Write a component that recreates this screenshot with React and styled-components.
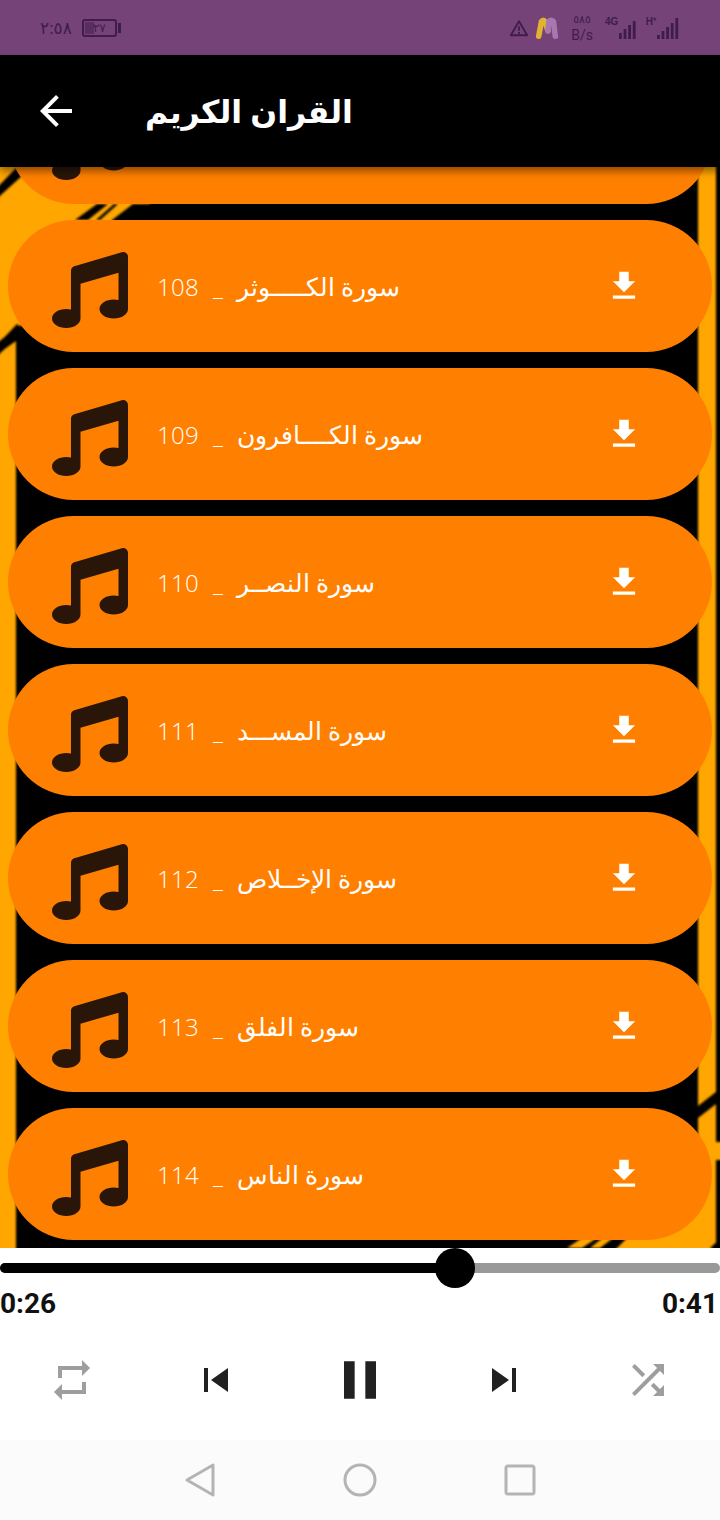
import React from 'react';
import styled, { createGlobalStyle } from 'styled-components';
import { FaMusic } from 'react-icons/fa';

const tracks = [
  { id: 108, name: 'سورة الكـــــوثر' },
  { id: 109, name: 'سورة الكــــافرون' },
  { id: 110, name: 'سورة النصــر' },
  { id: 111, name: 'سورة المســـد' },
  { id: 112, name: 'سورة الإخــلاص' },
  { id: 113, name: 'سورة الفلق' },
  { id: 114, name: 'سورة الناس' },
];

const MaterialIcon = ({ d, size, color }) => (
  <svg width={ size } height={ size } viewBox="0 0 24 24" fill={ color }>
    <path d={ d } />
  </svg>
);

const icons = {
  back: 'M20 11H7.83l5.59-5.59L12 4l-8 8 8 8 1.41-1.41L7.83 13H20v-2z',
  download: 'M19 9h-4V3H9v6H5l7 7 7-7zM5 18v2h14v-2H5z',
  repeat: 'M7 7h10v3l4-4-4-4v3H5v6h2V7zm10 10H7v-3l-4 4 4 4v-3h12v-6h-2v4z',
  previous: 'M6 6h2v12H6zm3.5 6l8.5 6V6z',
  pause: 'M6 19h4V5H6v14zm8-14v14h4V5h-4z',
  next: 'M6 18l8.5-6L6 6v12zM16 6v12h2V6h-2z',
  shuffle: 'M10.59 9.17L5.41 4 4 5.41l5.17 5.17 1.42-1.41zM14.5 4l2.04 2.04L4 18.59 5.41 20 17.96 7.46 20 9.5V4h-5.5zm.33 9.41l-1.41 1.41 3.13 3.13L14.5 20H20v-5.5l-2.04 2.04-3.13-3.13z',
};

const Signal = ({ bars }) => (
  <svg width={ bars.length * 4.6 } height="22" viewBox={ `0 0 ${ bars.length * 4.6 } 22` } fill={ statusInk }>
    { bars.map((h, i) => <rect key={ i } x={ i * 4.6 + 1 } y={ 22 - h } width="2.8" height={ h } />) }
  </svg>
);

const Backdrop = () => (
  <BackdropArt viewBox="0 167 720 1081" preserveAspectRatio="none">
    <BackdropLayer>
      <rect x="-10" y="157" width="740" height="1101" fill="#000" />
      <g fill="#ffa600">
        <polygon points="-10,157 150,157 150,204 133,204 112,220 90,300 17,327 -10,349" />
        <polygon points="-10,359 16,341 16,1258 -10,1258" />
        <polygon points="698,157 716,157 716,1092 698,1106" />
        <polygon points="698,1118 716,1104 716,1142 730,1142 730,1160 716,1160 716,1258 607,1258 640,1225 698,1200" />
        <polygon points="567,1248 585,1236 600,1236 582,1248" />
        <polygon points="590,1248 605,1236 616,1236 600,1248" />
      </g>
      <g fill="#000">
        <polygon points="-10,195 17,167 24,174 -10,205" />
        <polygon points="-10,353 17,324 24,330 -10,363" />
        <polygon points="97,204 108,204 88,220 75,220" />
        <polygon points="114,204 118,204 100,220 96,220" />
        <polygon points="710,1248 730,1230 730,1258" />
      </g>
    </BackdropLayer>
  </BackdropArt>
);

const App = () => (
  <Screen>
    <GlobalStyle />
    <StatusBar>
      <StatusGroup>
        <Clock>٢:٥٨</Clock>
        <Battery><BatteryLevel>٢٧</BatteryLevel></Battery>
      </StatusGroup>
      <StatusGroup>
        <svg width="20" height="20" viewBox="0 0 22 20" fill="none" stroke={ statusInk } strokeWidth="2">
          <path d="M11 2.5 20 18H2z" strokeLinejoin="round" />
          <path d="M11 8v5M11 14.5v2" />
        </svg>
        <BrandMark width="24" height="24" viewBox="0 0 26 24" fill="none" strokeWidth="6" strokeLinecap="round">
          <path d="M4 21 7 5q2-3 4 0l3 10" stroke="#e3b32f" />
          <path d="M14 15l1-10q3-3 5 0l2 16" stroke="#a777b0" />
        </BrandMark>
        <NetSpeed>
          <SpeedValue>٥٨٥</SpeedValue>
          <SpeedUnit>B/s</SpeedUnit>
        </NetSpeed>
        <Network>
          <NetworkLabel>4G</NetworkLabel>
          <Signal bars={ [6, 10, 14, 18] } />
        </Network>
        <Network>
          <NetworkLabel>H⁺</NetworkLabel>
          <Signal bars={ [4, 8, 12, 16, 21] } />
        </Network>
      </StatusGroup>
    </StatusBar>

    <AppBar>
      <BackButton><MaterialIcon d={ icons.back } size={ 48 } color="#fff" /></BackButton>
      <Title>القران الكريم</Title>
    </AppBar>

    <ListArea>
      <Backdrop />
      <TrackList>
        <TrackRow>
          <NoteIcon><FaMusic size={ 76 } /></NoteIcon>
        </TrackRow>
        { tracks.map(({ id, name }) => (
          <TrackRow key={ id }>
            <NoteIcon><FaMusic size={ 76 } /></NoteIcon>
            <TrackLabel>
              <TrackNumber>{ id }</TrackNumber>
              <Dash>_</Dash>
              <TrackName>{ name }</TrackName>
            </TrackLabel>
            <MaterialIcon d={ icons.download } size={ 38 } color="#fff" />
          </TrackRow>
        )) }
      </TrackList>
    </ListArea>

    <Player>
      <Slider>
        <SliderFill style={{ width: `${ 455 / 720 * 100 }%` }} />
        <SliderThumb />
      </Slider>
      <Times>
        <span>0:26</span>
        <span>0:41</span>
      </Times>
      <Controls>
        <Control><MaterialIcon d={ icons.repeat } size={ 48 } color="#9e9e9e" /></Control>
        <Control><MaterialIcon d={ icons.previous } size={ 48 } color="#212121" /></Control>
        <Control><MaterialIcon d={ icons.pause } size={ 64 } color="#212121" /></Control>
        <Control><MaterialIcon d={ icons.next } size={ 48 } color="#212121" /></Control>
        <Control><MaterialIcon d={ icons.shuffle } size={ 48 } color="#9e9e9e" /></Control>
      </Controls>
    </Player>

    <NavBar>
      <NavKey>
        <svg width="32" height="36" viewBox="0 0 32 36" fill="none" stroke={ navInk } strokeWidth="3" strokeLinejoin="round">
          <path d="M29 3v30L3 18z" />
        </svg>
      </NavKey>
      <NavKey>
        <svg width="34" height="34" viewBox="0 0 34 34" fill="none" stroke={ navInk } strokeWidth="3">
          <circle cx="17" cy="17" r="15" />
        </svg>
      </NavKey>
      <NavKey>
        <svg width="32" height="32" viewBox="0 0 32 32" fill="none" stroke={ navInk } strokeWidth="3">
          <rect x="2" y="2" width="28" height="28" rx="2" />
        </svg>
      </NavKey>
    </NavBar>
  </Screen>
);

const statusInk = '#3f1c4a';
const navInk = '#b4b4b4';
const arabicStack = '"Open Sans", "Noto Sans", "DejaVu Sans", sans-serif';

const GlobalStyle = createGlobalStyle`
  html, body {
    margin: 0;
    padding: 0;
    background: #fff;
  }
`;

const Screen = styled.div`
  display: flex;
  flex-direction: column;
  height: 1520px;
  overflow: hidden;
  width: 720px;
`;

const StatusBar = styled.div`
  align-items: center;
  background: #764379;
  box-sizing: border-box;
  color: ${statusInk};
  display: flex;
  flex: 0 0 55px;
  justify-content: space-between;
  padding: 0 41px 0 40px;
`;

const StatusGroup = styled.div`
  align-items: center;
  display: flex;
`;

const Clock = styled.span`
  font-family: ${arabicStack};
  font-size: 17px;
  margin-right: 10px;
`;

const Battery = styled.span`
  align-items: center;
  border: 2px solid ${statusInk};
  border-radius: 3px;
  box-sizing: border-box;
  display: flex;
  height: 18px;
  justify-content: center;
  position: relative;
  width: 35px;

  &::before {
    background: rgba(63, 28, 74, .55);
    bottom: 1px;
    content: '';
    left: 1px;
    position: absolute;
    top: 1px;
    width: 9px;
  }

  &::after {
    background: ${statusInk};
    content: '';
    height: 10px;
    position: absolute;
    right: -6px;
    width: 3px;
  }
`;

const BatteryLevel = styled.span`
  font-family: ${arabicStack};
  font-size: 12px;
  line-height: 1;
`;

const BrandMark = styled.svg`
  margin-left: 6px;
`;

const NetSpeed = styled.div`
  align-items: center;
  display: flex;
  flex-direction: column;
  line-height: 1;
  margin: 0 12px;
  width: 22px;
`;

const SpeedValue = styled.span`
  font-family: ${arabicStack};
  font-size: 11px;
  margin-bottom: 4px;
`;

const SpeedUnit = styled.span`
  font-family: Roboto, sans-serif;
  font-size: 14px;
`;

const Network = styled.div`
  align-items: flex-start;
  display: flex;

  & + & {
    margin-left: 9px;
  }
`;

const NetworkLabel = styled.span`
  font-family: "Liberation Sans", sans-serif;
  font-size: 10px;
  font-weight: 700;
  line-height: 1;
`;

const AppBar = styled.header`
  align-items: center;
  background: #000;
  box-shadow: 0 4px 8px rgba(0, 0, 0, .45);
  display: flex;
  flex: 0 0 112px;
  padding-left: 32px;
  position: relative;
  z-index: 2;
`;

const BackButton = styled.div`
  display: flex;
  height: 48px;
  width: 48px;
`;

const Title = styled.h1`
  color: #fff;
  font-family: ${arabicStack};
  font-size: 31.5px;
  font-weight: 700;
  line-height: 1;
  margin: 0 0 0 65px;
`;

const ListArea = styled.main`
  flex: 0 0 1081px;
  overflow: hidden;
  position: relative;
`;

const BackdropArt = styled.svg`
  height: 100%;
  inset: 0;
  position: absolute;
  width: 100%;
`;

const BackdropLayer = styled.g`
  filter: blur(.8px);
`;

const TrackList = styled.div`
  display: flex;
  flex-direction: column;
  gap: 16px;
  margin-top: -95px;
  padding: 0 8px;
  position: relative;
`;

const TrackRow = styled.div`
  align-items: center;
  background: #ff8000;
  border-radius: 66px;
  display: flex;
  flex: 0 0 132px;
  padding: 0 69px 0 44px;
`;

const NoteIcon = styled.div`
  color: #2a1608;
  display: flex;
  margin-top: 8px;
`;

const TrackLabel = styled.div`
  align-items: baseline;
  color: #fff;
  display: flex;
  flex: 1;
  font-family: ${arabicStack};
  font-size: 24px;
  font-weight: 300;
  margin-left: 29px;
`;

const TrackNumber = styled.span`
  letter-spacing: .3px;
`;

const Dash = styled.span`
  margin: 0 14px;
`;

const TrackName = styled.span`
  direction: rtl;
  font-size: 25px;
  line-height: 1;
`;

const Player = styled.section`
  background: #fff;
  display: flex;
  flex: 0 0 192px;
  flex-direction: column;
`;

const Slider = styled.div`
  background: #999;
  border-radius: 5px;
  height: 10px;
  margin-top: 15px;
  position: relative;
  width: 720px;
`;

const SliderFill = styled.div`
  background: #000;
  border-radius: 5px 0 0 5px;
  height: 100%;
`;

const SliderThumb = styled.div`
  background: #000;
  border-radius: 50%;
  height: 40px;
  left: 435px;
  position: absolute;
  top: -15px;
  width: 40px;
`;

const Times = styled.div`
  color: #111;
  display: flex;
  font-family: Roboto, sans-serif;
  font-size: 28px;
  font-weight: 700;
  justify-content: space-between;
  line-height: 1;
  margin-top: 17px;
  padding-right: 2px;
`;

const Controls = styled.div`
  display: grid;
  grid-template-columns: repeat(5, 144px);
  height: 64px;
  margin-top: 30px;
`;

const Control = styled.div`
  align-items: center;
  display: flex;
  justify-content: center;
`;

const NavBar = styled.nav`
  align-items: center;
  background: #fbfbfb;
  display: grid;
  flex: 0 0 80px;
  grid-template-columns: repeat(3, 160px);
  justify-content: center;
`;

const NavKey = styled.div`
  display: flex;
  justify-content: center;
`;

export default App;
